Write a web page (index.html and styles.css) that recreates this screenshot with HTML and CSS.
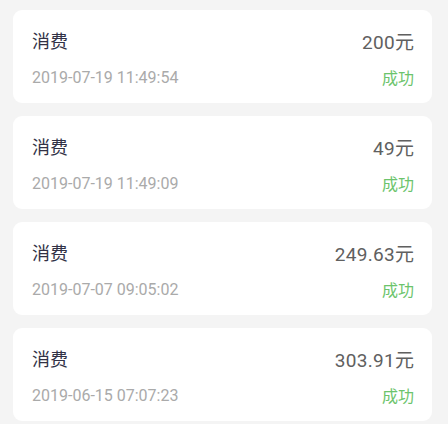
FILE: index.html
```html
<!DOCTYPE html>
<html lang="zh-CN">

<head>
    <meta charset="UTF-8" />
    <meta name="viewport" content="width=device-width, initial-scale=1.0" />
    <title>消费记录</title>
    <link rel="stylesheet" href="styles.css">
</head>

<body class="page">
    <ul class="record-list">
        <li class="record">
            <div class="record-row">
                <span class="record-type">消费</span>
                <span class="record-amount">200元</span>
            </div>
            <div class="record-row record-row-sub">
                <span class="record-time">2019-07-19 11:49:54</span>
                <span class="record-status">成功</span>
            </div>
        </li>
        <li class="record">
            <div class="record-row">
                <span class="record-type">消费</span>
                <span class="record-amount">49元</span>
            </div>
            <div class="record-row record-row-sub">
                <span class="record-time">2019-07-19 11:49:09</span>
                <span class="record-status">成功</span>
            </div>
        </li>
        <li class="record">
            <div class="record-row">
                <span class="record-type">消费</span>
                <span class="record-amount">249.63元</span>
            </div>
            <div class="record-row record-row-sub">
                <span class="record-time">2019-07-07 09:05:02</span>
                <span class="record-status">成功</span>
            </div>
        </li>
        <li class="record">
            <div class="record-row">
                <span class="record-type">消费</span>
                <span class="record-amount">303.91元</span>
            </div>
            <div class="record-row record-row-sub">
                <span class="record-time">2019-06-15 07:07:23</span>
                <span class="record-status">成功</span>
            </div>
        </li>
    </ul>
</body>

</html>
```

FILE: styles.css
```css
.page {
    margin: 0;
    background-color: rgb(244, 244, 244);
    font-family: Roboto, "Noto Sans CJK SC", sans-serif;
}

.record-list {
    list-style: none;
    margin: 0;
    padding: 10px 16px 0 13px;
    display: flex;
    flex-direction: column;
    gap: 13px;
}

.record {
    background-color: rgb(255, 255, 255);
    border-radius: 9px;
    padding: 18px 18px 16px 19px;
    display: flex;
    flex-direction: column;
    gap: 15px;
}

.record-row {
    display: flex;
    justify-content: space-between;
    align-items: center;
    height: 24px;
}

.record-row-sub {
    height: 20px;
}

.record-type {
    font-size: 18px;
    color: rgb(50, 50, 70);
}

.record-amount {
    font-size: 19px;
    letter-spacing: 0.3px;
    margin-right: -0.3px;
    color: rgb(96, 96, 96);
}

.record-time {
    font-size: 16px;
    color: rgb(170, 170, 170);
}

.record-status {
    font-size: 16px;
    color: rgb(108, 196, 108);
}
```
